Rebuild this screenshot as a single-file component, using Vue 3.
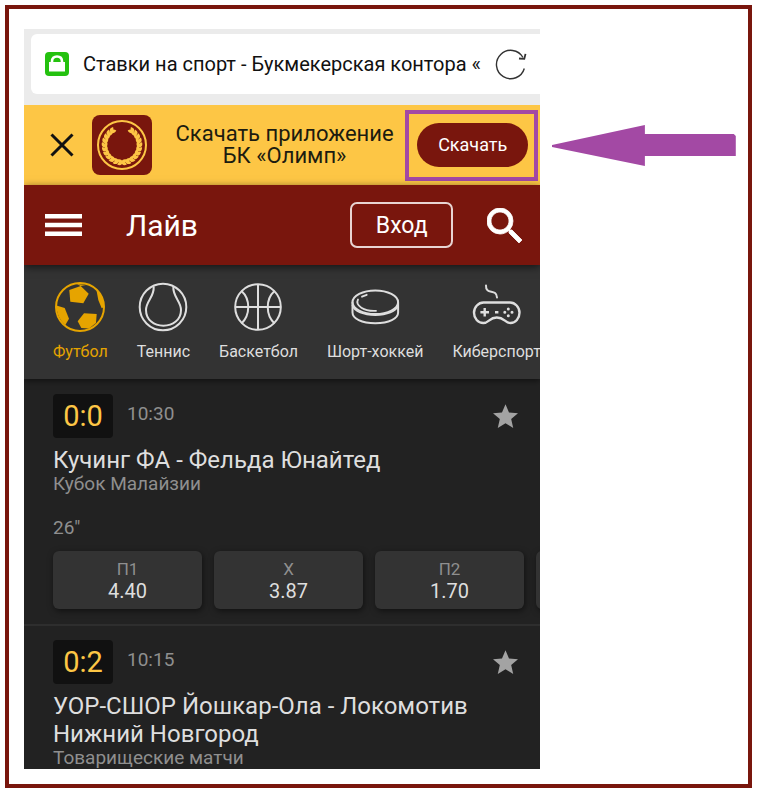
<template>
  <div class="frame">
    <div class="phone">
      <div class="address-bar">
        <div class="address">
          <svg width="24" height="24" viewBox="0 0 24 24">
            <rect width="24" height="24" rx="4" fill="#24c10f" />
            <path d="M4 10h16v9.500H4z" fill="#fff" />
            <path d="M7 11V9.500c0-3.300 2-5 5-5s5 1.700 5 5V11" fill="none" stroke="#fff" stroke-width="2.600" />
          </svg>
          <span class="address-text">Ставки на спорт - Букмекерская контора «</span>
          <button class="icon-btn" aria-label="Обновить">
            <svg width="32" height="32" viewBox="0 0 32 32" fill="none" stroke="#333" stroke-width="1.400">
              <path d="M29.300 20.500A14.200 14.200 0 1 1 28 9.500" />
              <path d="M24 10.500l5.300.400 1.200-5" stroke-width="1.800" />
            </svg>
          </button>
        </div>
      </div>

      <div class="banner">
        <button class="icon-btn" aria-label="Закрыть">
          <svg width="24" height="24" viewBox="0 0 24 24" stroke="#111" stroke-width="3">
            <path d="M1.500 1.500l21 21M22.500 1.500l-21 21" />
          </svg>
        </button>
        <svg class="logo" width="60" height="60" viewBox="0 0 60 60">
          <rect width="60" height="60" rx="8" fill="#79160d" />
          <circle cx="30" cy="30" r="24" fill="none" stroke="#fdc645" stroke-width="2" />
          <g fill="#fdc645">
            <path v-for="(leaf, i) in leaves" :key="i" d="M0 0C1.200-2.400 3.800-2.600 6 0 3.800 2 1.200 2 0 0z" :transform="leaf" />
          </g>
        </svg>
        <p class="banner-text">Скачать приложение<br />БК «Олимп»</p>
        <div class="highlight">
          <button class="download-btn">Скачать</button>
        </div>
      </div>

      <header class="header">
        <button class="icon-btn" aria-label="Меню">
          <svg width="37" height="22" viewBox="0 0 37 22" fill="#fff">
            <path d="M0 0h37v4.500H0zM0 8.700h37v4.500H0zM0 17.400h37v4.500H0z" />
          </svg>
        </button>
        <h1 class="header-title">Лайв</h1>
        <button class="login-btn">Вход</button>
        <button class="icon-btn" aria-label="Поиск">
          <svg width="35" height="35" viewBox="3 3 17.500 17.500" fill="#fff" stroke="#fff" stroke-width="0.400">
            <path d="M15.500 14h-.790l-.280-.270A6.471 6.471 0 0 0 16 9.500 6.500 6.500 0 1 0 9.500 16c1.610 0 3.090-.590 4.230-1.570l.270.280v.790l5 4.990L20.490 19l-4.990-5zm-6 0C7.010 14 5 11.990 5 9.500S7.010 5 9.500 5 14 7.010 14 9.500 11.990 14 9.500 14z" />
          </svg>
        </button>
      </header>

      <nav class="sports">
        <a v-for="sport in sports" :key="sport.id" href="#" class="sport" :class="{ active: sport.id === activeSport }" @click.prevent="activeSport = sport.id">
          <svg width="50" height="50" viewBox="0 0 50 50" fill="none" stroke="currentColor" stroke-width="2">
            <g v-if="sport.id === 'football'">
              <circle cx="25" cy="25" r="24" />
              <g fill="currentColor" stroke="none">
                <path d="M14.300 8l11.400-4 8 7.700-5.400 9.600-13-1.600z" />
                <path d="M22.700 39.300l6.300-8 12.700.700-.700 9-7 5.500-7.700-.500z" />
                <path d="M1.500 23.500l8.200 2.500 4.300 10.700-3.700 6.300C4.500 38 1.500 31 1.500 23.500z" />
                <path d="M41.500 8.500C46 12 49 18 49.300 25l-2.600 1.300-3.400-8.300z" />
                <path d="M22 2l3.500 2L31 3z" />
              </g>
            </g>
            <g v-else-if="sport.id === 'tennis'">
              <circle cx="25" cy="25" r="23.300" />
              <path d="M15.700 4.500C16.500 15 8 19 8 28c0 10 8 15.700 17.400 15.700S43 38 43 28c0-9-8.300-13-7.700-23.500" />
            </g>
            <g v-else-if="sport.id === 'basketball'">
              <circle cx="25" cy="25" r="22.800" />
              <path d="M25 2v46M2 25h46M8.500 9c9 8 9 24 0 32.500M41.500 9c-9 8-9 24 0 32.500" />
            </g>
            <g v-else-if="sport.id === 'puck'" stroke-linecap="round">
              <ellipse cx="25.300" cy="20.300" rx="22.800" ry="11.800" />
              <path d="M2.500 20.500v10c0 6 9 10.800 22.800 10.800s22.800-4.800 22.800-10.800v-10" />
              <path d="M2.500 23.500c2 6 11 9.500 22.800 9.500s20.800-3.500 22.800-9.500" stroke-width="1.800" />
              <path d="M8 17.500c-3 6 6 12 18 11.300M12 14.700l4.700-1.900" stroke-width="1.800" />
            </g>
            <g v-else stroke-linecap="round">
              <path d="M14 3.500c-.500 10 10.500 2.500 11 12" />
              <path d="M11.500 20.500h26.500c5 0 9.500 4.500 9.500 10.200 0 5.800-4 10.300-9 10.300-5.500 0-6-5.500-13.700-5.500S17 41 11.300 41c-5.300 0-9.300-4.500-9.300-10.300 0-5.700 4.500-10.200 9.500-10.200z" stroke-width="2.400" />
              <path d="M12.700 26v8.600M8.400 30.300h8.600M23 30.300h3.400" stroke-width="2.400" stroke-linecap="butt" />
              <path d="M36.300 26.900v.01M36.300 33.700v.01M32.800 30.300h.01M40 30.300h.01" stroke-width="3" />
            </g>
          </svg>
          <span>{{ sport.name }}</span>
        </a>
      </nav>

      <main>
        <article v-for="match in matches" :key="match.title" class="match">
          <div class="match-top">
            <span class="score">{{ match.score }}</span>
            <time class="time">{{ match.time }}</time>
            <button class="icon-btn star" aria-label="В избранное">
              <svg width="25" height="24" viewBox="2 2 20 19" fill="#a3a3a3">
                <path d="M12 17.270L18.180 21l-1.640-7.030L22 9.240l-7.190-.610L12 2 9.190 8.630 2 9.240l5.460 4.730L5.820 21z" />
              </svg>
            </button>
          </div>
          <h2 class="match-title">{{ match.title }}</h2>
          <p class="league">{{ match.league }}</p>
          <template v-if="match.odds">
            <p class="minute">{{ match.minute }}</p>
            <div class="odds">
              <button v-for="odd in match.odds" :key="odd.label" class="odd">
                <span class="odd-label">{{ odd.label }}</span>
                <span class="odd-value">{{ odd.value }}</span>
              </button>
            </div>
          </template>
        </article>
      </main>
    </div>

    <div class="pointer">
      <svg viewBox="0 0 184 42" fill="#a349a4">
        <path d="M0 20L93 0v9h89l2 2v20H93v10L0 22z" />
      </svg>
    </div>
  </div>
</template>

<script setup>
import { ref } from 'vue'

const activeSport = ref('football')

const sports = [
  { id: 'football', name: 'Футбол' },
  { id: 'tennis', name: 'Теннис' },
  { id: 'basketball', name: 'Баскетбол' },
  { id: 'puck', name: 'Шорт-хоккей' },
  { id: 'esports', name: 'Киберспорт' }
]

const matches = [
  {
    score: '0:0',
    time: '10:30',
    title: 'Кучинг ФА - Фельда Юнайтед',
    league: 'Кубок Малайзии',
    minute: '26"',
    odds: [
      { label: 'П1', value: '4.40' },
      { label: 'X', value: '3.87' },
      { label: 'П2', value: '1.70' },
      { label: '', value: '' }
    ]
  },
  {
    score: '0:2',
    time: '10:15',
    title: 'УОР-СШОР Йошкар-Ола - Локомотив Нижний Новгород',
    league: 'Товарищеские матчи'
  }
]

// laurel wreath: pairs of leaves going up both sides of the logo
const leaves = []
for (let a = 88; a <= 240; a += 14) {
  for (const side of [1, -1]) {
    for (const tilt of [-24, 24]) {
      leaves.push(`translate(30 30) scale(${side} 1) rotate(${a}) translate(17 0) rotate(${90 + tilt})`)
    }
  }
}
</script>

<style>
body {
  margin: 0;
  background: #fff;
}
</style>

<style scoped>
.frame {
  display: grid;
  grid-template-columns: minmax(0, 29fr) minmax(0, 11fr);
  align-items: start;
  margin: 5px 15px 11px 5px;
  padding: 20px 12px 15px 15px;
  border: 4px solid #79160d;
  font-family: Roboto, "Liberation Sans", sans-serif;
}

.phone {
  overflow: hidden;
  background: #222;
  color: #dedede;
}

h1,
h2,
p {
  margin: 0;
  font-weight: 400;
}

button {
  font-family: inherit;
  cursor: pointer;
}

svg {
  display: block;
  flex-shrink: 0;
}

.icon-btn {
  padding: 0;
  border: none;
  background: none;
}

.address-bar {
  padding: 5px 0 11px 7px;
  background: #ebebeb;
}

.address {
  display: flex;
  align-items: center;
  height: 60px;
  padding: 0 13px 0 14px;
  border-radius: 6px 0 0 6px;
  background: #fff;
  color: #111;
}

.address-text {
  flex: 1;
  margin-left: 14px;
  overflow: hidden;
  font-size: 20px;
  white-space: nowrap;
}

.banner {
  display: flex;
  align-items: center;
  height: 80px;
  padding: 0 2px 0 26px;
  background: #fdc645;
  color: #1c1c10;
}

.logo {
  margin-left: 18px;
}

.banner-text {
  flex: 1;
  padding-left: 12px;
  font-size: 22px;
  line-height: 22px;
  text-align: center;
  white-space: nowrap;
}

.highlight {
  padding: 9px 6px 10px 8px;
  border: 4px solid #a349a4;
}

.download-btn {
  display: block;
  width: 111px;
  height: 44px;
  padding: 0;
  border: none;
  border-radius: 22px;
  background: #79160d;
  color: #fff;
  font-size: 18px;
}

.header {
  position: relative;
  z-index: 1;
  display: flex;
  align-items: center;
  height: 80px;
  padding: 0 18px 0 21px;
  background: #79160d;
  box-shadow: 0 2px 8px rgba(0, 0, 0, 0.6);
  color: #fff;
}

.header-title {
  flex: 1;
  margin-left: 44px;
  font-size: 30px;
}

.login-btn {
  width: 103px;
  height: 46px;
  margin-right: 34px;
  padding: 0;
  border: 2px solid #e8d4d2;
  border-radius: 7px;
  background: none;
  color: #fff;
  font-size: 23px;
}

.sports {
  display: flex;
  gap: 29px;
  height: 97px;
  padding: 17px 0 0 29px;
  background: #333;
  box-shadow: 0 2px 6px rgba(0, 0, 0, 0.5);
}

.sport {
  display: flex;
  flex-direction: column;
  align-items: center;
  gap: 10px;
  color: #dedede;
  font-size: 16px;
  line-height: 20px;
  text-decoration: none;
  white-space: nowrap;
}

.sport.active {
  color: #e6a400;
}

.match {
  padding: 15px 0 1px 29px;
}

.match + .match {
  margin-top: 14px;
  padding-top: 14px;
  border-top: 2px solid #2e2e2e;
}

.match-top {
  display: flex;
  align-items: center;
  margin-bottom: 8px;
}

.score {
  width: 60px;
  border-radius: 4px;
  background: #111;
  color: #fdc645;
  font-size: 29px;
  line-height: 44px;
  text-align: center;
}

.time {
  flex: 1;
  margin-left: 14px;
  padding-bottom: 5px;
  color: #8f8f8f;
  font-size: 19px;
}

.star {
  margin-right: 22px;
}

.match-title {
  font-size: 24px;
  line-height: 28px;
}

.league,
.minute {
  color: #8f8f8f;
  font-size: 19px;
  line-height: 20px;
}

.minute {
  margin: 24px 0 13px;
}

.odds {
  display: flex;
  gap: 12px;
}

.odd {
  display: flex;
  flex: 0 0 149px;
  flex-direction: column;
  align-items: center;
  justify-content: center;
  height: 58px;
  padding: 0;
  border: none;
  border-radius: 6px;
  background: #333;
  box-shadow: 1px 2px 6px rgba(0, 0, 0, 0.5);
  color: #dedede;
}

.odd-label {
  color: #8f8f8f;
  font-size: 17px;
  line-height: 22px;
}

.odd-value {
  font-size: 20px;
  line-height: 22px;
}

.pointer {
  padding: 96px 0 0 12px;
}
</style>
